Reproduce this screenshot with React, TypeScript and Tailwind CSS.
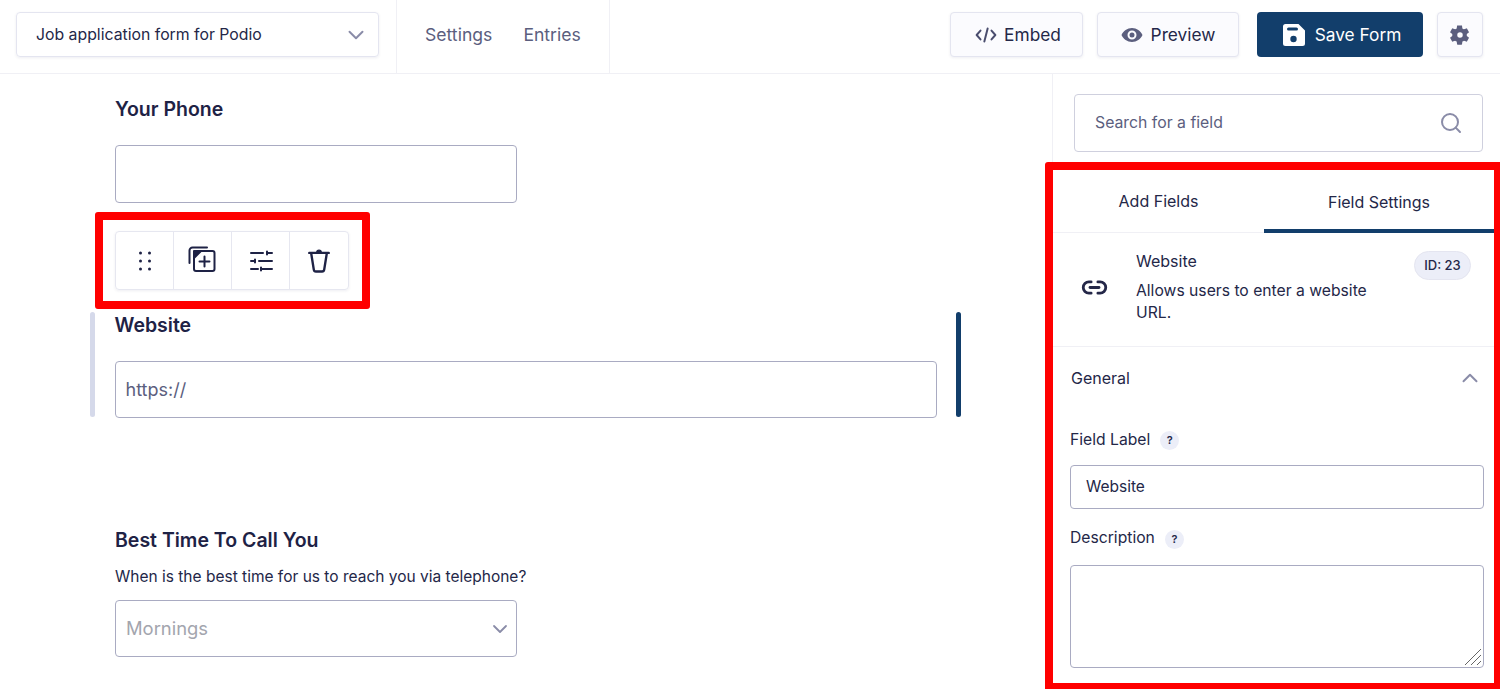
import React from "react";
import { ChevronDown, ChevronUp, Link2, Search } from "lucide-react";

const Icon = ({ size = 24, box = 24, children }: { size?: number; box?: number; children: React.ReactNode }) => (
  <svg width={size} height={size} viewBox={`0 0 ${box} ${box}`} fill="none" stroke="currentColor" strokeWidth="2" strokeLinecap="round" strokeLinejoin="round">
    {children}
  </svg>
);

const HeaderButton = ({ className, children }: { className: string; children: React.ReactNode }) => (
  <button className={`flex h-[45px] items-center justify-center rounded border border-[#e4e5f0] bg-[#fbfbfe] text-[17.300px] text-[#242748] shadow-[0_1px_3px_rgba(40,40,90,0.08)] ${className}`}>
    {children}
  </button>
);

const ToolButton = ({ children }: { children: React.ReactNode }) => (
  <div className="flex w-[58px] items-center justify-center border-r border-[#e6e7f0] text-[#1e2245] last:border-r-0">{children}</div>
);

const Help = ({ className }: { className?: string }) => (
  <span className={`flex h-[19px] w-[19px] items-center justify-center rounded-full bg-[#eceef8] text-[11px] font-semibold text-[#242748] ${className ?? ""}`}>?</span>
);

export default function App() {
  return (
    <div className="flex h-[689px] w-[1500px] flex-col overflow-hidden bg-white font-['Inter',sans-serif] text-[#242748]">
      <header className="flex h-[74px] shrink-0 items-stretch border-b border-[#f0f0f5] pl-4 pr-[17px]">
        <div className="flex items-start pr-[17px] pt-3">
          <div className="flex h-[45px] w-[363px] items-center justify-between rounded border border-[#e4e5f0] pl-[19px] pr-[9px] text-[15.800px] shadow-[0_1px_3px_rgba(40,40,90,0.08)]">
            <span>Job application form for Podio</span>
            <ChevronDown size={26} strokeWidth={1.800} className="text-[#8a8ca8]" />
          </div>
        </div>
        <nav className="flex w-[214px] items-center gap-[31px] border-x border-[#f0f0f5] pb-[3px] pl-[28px] text-[17.600px] text-[#5b5e7e]">
          <span>Settings</span>
          <span>Entries</span>
        </nav>
        <div className="ml-auto flex items-start pt-3">
          <HeaderButton className="w-[133px] gap-[7px] pl-[3px]">
            <svg width="22" height="18" viewBox="0 0 20 16" fill="none" stroke="#4a4d6e" strokeWidth="1.800" strokeLinecap="round" strokeLinejoin="round">
              <path d="M5 4 1.500 8 5 12M15 4l3.500 4L15 12M11.500 2l-3 12" />
            </svg>
            Embed
          </HeaderButton>
          <HeaderButton className="ml-[14px] w-[142px] gap-[8px]">
            <svg width="22" height="16" viewBox="0 0 22 16" fill="#5b5e7e">
              <path fillRule="evenodd" d="M11 1c4.700 0 8.700 2.900 10.500 7-1.800 4.100-5.800 7-10.500 7S2.300 12.100.5 8C2.300 3.900 6.300 1 11 1Zm0 2.500a4.500 4.500 0 1 0 0 9 4.500 4.500 0 0 0 0-9Zm0 2a2.500 2.500 0 1 1 0 5 2.500 2.500 0 0 1 0-5Z" />
            </svg>
            Preview
          </HeaderButton>
          <button className="ml-[18px] flex h-[45px] w-[166px] items-center justify-center gap-[10px] rounded bg-[#123e6b] pl-[4px] text-[17.300px] text-white">
            <svg width="22" height="22" viewBox="0 0 22 22" fill="white">
              <path fillRule="evenodd" d="M2.500 0H15.500L22 6.500V19.500A2.500 2.500 0 0 1 19.500 22H2.500A2.500 2.500 0 0 1 0 19.500V2.500A2.500 2.500 0 0 1 2.500 0ZM5.500 3.500a1.500 1.500 0 0 0 0 3h8a1.500 1.500 0 0 0 0-3h-8ZM10.500 11.800a3.200 3.200 0 1 0 0 6.400 3.200 3.200 0 0 0 0-6.400Z" />
            </svg>
            Save Form
          </button>
          <HeaderButton className="ml-[14px] w-[46px]">
            <svg width="22" height="22" viewBox="0 0 24 24" fill="#5b5e7e">
              <path fillRule="evenodd" d="M19.400 13a7.600 7.600 0 0 0 0-2l2.200-1.700a.6.6 0 0 0 .1-.7l-2.100-3.600a.6.6 0 0 0-.7-.2l-2.600 1a7.700 7.700 0 0 0-1.700-1l-.4-2.800a.6.6 0 0 0-.6-.5H9.400a.6.6 0 0 0-.6.500l-.4 2.800c-.6.300-1.200.6-1.700 1l-2.600-1a.6.6 0 0 0-.7.2L1.300 8.600a.6.6 0 0 0 .1.7L3.600 11a7.600 7.600 0 0 0 0 2l-2.200 1.700a.6.6 0 0 0-.1.7l2.100 3.600c.1.200.4.300.7.200l2.600-1c.5.400 1.100.7 1.700 1l.4 2.800c0 .3.300.5.600.5h4.200c.3 0 .6-.2.600-.5l.4-2.800c.6-.3 1.200-.6 1.700-1l2.600 1c.3.100.6 0 .7-.2l2.100-3.600a.6.6 0 0 0-.1-.7L19.400 13ZM12 15a3 3 0 1 1 0-6 3 3 0 0 1 0 6Z" />
            </svg>
          </HeaderButton>
        </div>
      </header>

      <div className="flex min-h-0 flex-1">
        <main className="w-[1053px] shrink-0 border-r border-[#f0f0f5]">
          <div className="pl-[115px] pt-[22px]">
            <h2 className="text-[19.500px] leading-[26px] font-semibold text-[#1e2245]">Your Phone</h2>
            <div className="mt-[23px] h-[58px] w-[402px] rounded border border-[#a9abc2]" />
          </div>

          <div className="ml-[95px] mt-[9px] w-[275px] rounded-[3px] border-8 border-[#ff0000] p-[11px] pl-3">
            <div className="flex h-[59px] w-[234px] rounded border border-[#e6e7f0] shadow-[0_1px_3px_rgba(40,40,90,0.08)]">
              <ToolButton>
                <svg width="14" height="22" viewBox="0 0 14 22" fill="currentColor">
                  <circle cx="2.500" cy="3" r="1.500" />
                  <circle cx="11.500" cy="3" r="1.500" />
                  <circle cx="2.500" cy="11" r="1.500" />
                  <circle cx="11.500" cy="11" r="1.500" />
                  <circle cx="2.500" cy="19" r="1.500" />
                  <circle cx="11.500" cy="19" r="1.500" />
                </svg>
              </ToolButton>
              <ToolButton>
                <Icon size={30} box={30}>
                  <rect x="6" y="5" width="20.500" height="20" rx="2" />
                  <path d="M6 12V5h7Z" fill="currentColor" />
                  <path d="M16.500 10.500v10M11.500 15.500h10" />
                  <path d="M1.500 17V4.500a3 3 0 0 1 3-3H19" />
                </Icon>
              </ToolButton>
              <ToolButton>
                <Icon size={26} box={26}>
                  <path d="M3 5H15M19 3.500v3M19 5h5" />
                  <path d="M3 13h3M7 11.500v3M11 13H24" />
                  <path d="M3 21h7M13 19.500v3M13 21H24" />
                </Icon>
              </ToolButton>
              <ToolButton>
                <Icon size={26}>
                  <path d="M3 4.500h18" strokeWidth="2.200" />
                  <path d="M4.800 5 7.200 20a2 2 0 0 0 2 1.700h5.600a2 2 0 0 0 2-1.700L19.200 5" strokeWidth="2.200" />
                  <path d="M9.800 4a2.200 2.200 0 0 1 4.400 0Z" fill="currentColor" strokeWidth="1" />
                </Icon>
              </ToolButton>
            </div>
          </div>

          <div className="ml-[90px] mt-[3px] flex h-[105px] w-[871px] justify-between">
            <div className="w-[5px] rounded-sm bg-[#d5d9ea]" />
            <div className="w-[822px]">
              <h2 className="text-[19.500px] leading-[26px] font-semibold text-[#1e2245]">Website</h2>
              <div className="mt-[23px] flex h-[57px] items-center rounded border border-[#a9abc2] pl-[10px] text-[18px] text-[#5b5e7e]">https://</div>
            </div>
            <div className="w-[5px] rounded-sm bg-[#123e6b]" />
          </div>

          <div className="pl-[115px] pt-[110px]">
            <h2 className="text-[19.500px] leading-[26px] font-semibold text-[#1e2245]">Best Time To Call You</h2>
            <p className="mt-[13px] text-[15.500px] leading-[22px]">When is the best time for us to reach you via telephone?</p>
            <div className="mt-[12px] flex h-[57px] w-[402px] items-center justify-between rounded border border-[#a9abc2] pl-[10px] pr-[4px] text-[18.400px] text-[#a3a5ae]">
              Mornings
              <ChevronDown size={24} strokeWidth={1.800} className="text-[#8a8ca8]" />
            </div>
          </div>
        </main>

        <aside className="flex min-w-0 flex-1 flex-col">
          <div className="ml-[21px] mr-[17px] mt-5 flex h-[58px] shrink-0 items-center justify-between rounded border border-[#cfd0de] pl-5 pr-[19px] text-[15.800px] text-[#5b5e7e]">
            Search for a field
            <Search size={24} strokeWidth={2} className="text-[#8a8ca8]" />
          </div>
          <div className="ml-[-8px] mr-[-2px] mt-[10px] flex h-[529px] shrink-0 flex-col rounded-[3px] border-8 border-[#ff0000] bg-white">
            <div className="flex h-[63px] shrink-0 border-b border-[#f0f0f5] text-base">
              <div className="flex w-[211px] items-center justify-center">Add Fields</div>
              <div className="mb-[-1px] flex w-[230px] items-center justify-center border-b-4 border-[#123e6b] pt-[4px]">Field Settings</div>
            </div>
            <div className="relative flex h-[114px] shrink-0 border-b border-[#f0f0f5] pl-[28px] pt-[16px]">
              <Link2 size={27} strokeWidth={2.500} className="mt-[25px] shrink-0 text-[#242748]" />
              <div className="ml-[28px] w-[250px] text-[15.700px] leading-[22px]">
                <div className="text-base">Website</div>
                <div className="mt-[7px]">Allows users to enter a website URL.</div>
              </div>
              <span className="absolute right-[23px] top-[18px] flex h-[29px] w-[57px] items-center justify-center rounded-full border border-[#e4e5f0] bg-[#eceef8] text-[13px] font-medium">ID: 23</span>
            </div>
            <div className="flex h-[48px] shrink-0 items-center justify-between pl-[18px] pr-[11px] pt-[14px] text-base leading-[22px]">
              General
              <ChevronUp size={26} strokeWidth={1.800} className="text-[#8a8ca8]" />
            </div>
            <div className="pl-[17px] pr-[10px]">
              <div className="mt-[34px] flex items-center gap-[10px] text-[15.700px] leading-[22px]">
                Field Label <Help />
              </div>
              <div className="mt-[14px] flex h-[44px] items-center rounded border border-[#a9abc2] pl-[15px] text-[15.500px]">Website</div>
              <div className="mt-[18px] flex items-center gap-[10px] text-[15.700px] leading-[22px]">
                Description <Help className="mt-[2px]" />
              </div>
              <div className="relative mt-[16px] h-[103px] rounded border border-[#a9abc2]">
                <svg className="absolute bottom-[1px] right-[1px]" width="18" height="18" viewBox="0 0 18 18" stroke="#666" strokeWidth="1">
                  <path d="M1 17 17 1M7 17 17 7M13 17l4-4" />
                </svg>
              </div>
            </div>
          </div>
        </aside>
      </div>
    </div>
  );
}
